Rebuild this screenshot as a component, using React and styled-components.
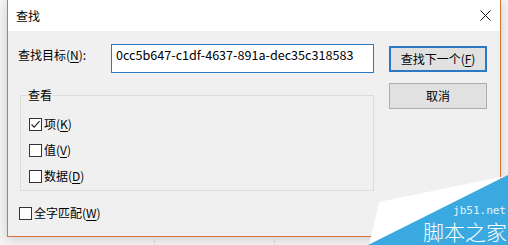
import React from 'react';
import styled, { createGlobalStyle } from 'styled-components';

const GlobalStyle = createGlobalStyle`
  html, body {
    margin: 0;
    padding: 0;
    background: #f4f4f4;
  }
  body {
    font-family: "Noto Sans CJK SC", "Noto Sans", sans-serif;
    font-size: 12px;
    color: #000;
  }
`;

const Screen = styled.div`
  position: relative;
  width: 508px;
  height: 245px;
  overflow: hidden;
  background: #f4f4f4;
  display: flex;
  flex-direction: column;
`;

const DialogRow = styled.div`
  display: flex;
  padding-left: 7px;
  height: 237px;
  flex-shrink: 0;
`;

const Dialog = styled.div`
  width: 494px;
  box-sizing: border-box;
  border: 1px solid #d9713a;
  border-top: none;
  background: #f0f0f0;
  box-shadow: 0 2px 10px rgba(0, 0, 0, 0.16);
  display: flex;
  flex-direction: column;
`;

const TitleBar = styled.div`
  height: 31px;
  flex-shrink: 0;
  background: #fff;
  display: flex;
  align-items: center;
  justify-content: space-between;
  padding-left: 8px;
`;

const Title = styled.span`
  line-height: 16px;
`;

const CloseBtn = styled.div`
  width: 30px;
  height: 31px;
  display: flex;
  align-items: center;
  justify-content: center;
`;

const Body = styled.div`
  flex: 1;
  display: grid;
  grid-template-columns: 366px 98px;
  column-gap: 15px;
  padding: 13px 13px 0 0;
`;

const LeftCol = styled.div`
  padding-left: 10px;
  display: flex;
  flex-direction: column;
`;

const FindRow = styled.div`
  display: flex;
  align-items: flex-start;
`;

const Label = styled.label`
  width: 93px;
  margin-top: 3px;
  line-height: 16px;
`;

const TextBox = styled.div`
  width: 263px;
  height: 29px;
  box-sizing: border-box;
  border: 1px solid #2a7bc4;
  background: #fff;
  padding: 2px 4px 0;
  line-height: 16px;
  font-size: 12.6px;
  white-space: nowrap;
`;

const Group = styled.fieldset`
  margin: 14px 0 0 2px;
  width: 354px;
  box-sizing: border-box;
  border: 1px solid #dcdcdc;
  padding: 8px 7px 1px;
`;

const Legend = styled.legend`
  padding: 0;
  line-height: 16px;
`;

const CheckRow = styled.div`
  display: flex;
  align-items: center;
  height: 26px;
  margin-left: ${p => p.$indent || 0}px;
  margin-top: ${p => p.$top || 0}px;
`;

const Box = styled.span`
  width: 13px;
  height: 13px;
  box-sizing: border-box;
  border: 1px solid #333;
  background: #fff;
  display: flex;
  align-items: center;
  justify-content: center;
  margin-right: 2px;
`;

const CheckText = styled.span`
  line-height: 16px;
`;

const Key = styled.u`
  text-underline-offset: 2px;
`;

const RightCol = styled.div`
  display: flex;
  flex-direction: column;
`;

const Button = styled.div`
  height: 26px;
  box-sizing: border-box;
  background: #e1e1e1;
  border: ${p => (p.$primary ? '2px solid #2b78c5' : '1px solid #adadad')};
  margin-top: ${p => p.$top}px;
  display: flex;
  align-items: center;
  justify-content: center;
  line-height: 16px;
`;

const Footer = styled.div`
  flex: 1;
  display: flex;
`;

const FooterCell = styled.div`
  width: ${p => p.$w}px;
  border-right: 1px solid #d6d6d6;
  box-sizing: border-box;
`;

const Watermark = styled.svg`
  position: absolute;
  right: 0;
  bottom: 0;
`;

const Check = ({ checked, children, indent, top }) => (
  <CheckRow $indent={indent} $top={top}>
    <Box>
      {checked && (
        <svg width="11" height="11" viewBox="0 0 11 11">
          <path d="M1.5 5.5 L4.2 8.2 L9.5 2.2" fill="none" stroke="#222" strokeWidth="1.1" />
        </svg>
      )}
    </Box>
    <CheckText>{children}</CheckText>
  </CheckRow>
);

export default function App() {
  return (
    <Screen>
      <GlobalStyle />
      <DialogRow>
        <Dialog>
          <TitleBar>
            <Title>查找</Title>
            <CloseBtn>
              <svg width="11" height="11" viewBox="0 0 11 11">
                <path d="M0.5 0.5 L10.5 10.5 M10.5 0.5 L0.5 10.5" stroke="#111" strokeWidth="1" />
              </svg>
            </CloseBtn>
          </TitleBar>
          <Body>
            <LeftCol>
              <FindRow>
                <Label>查找目标(<Key>N</Key>):</Label>
                <TextBox>0cc5b647-c1df-4637-891a-dec35c318583</TextBox>
              </FindRow>
              <Group>
                <Legend>查看</Legend>
                <Check checked indent={1}>项(<Key>K</Key>)</Check>
                <Check indent={1}>值(<Key>V</Key>)</Check>
                <Check indent={1}>数据(<Key>D</Key>)</Check>
              </Group>
              <Check indent={1} top={9}>全字匹配(<Key>W</Key>)</Check>
            </LeftCol>
            <RightCol>
              <Button $primary $top={2}>查找下一个(<Key>F</Key>)</Button>
              <Button $top={11}>取消</Button>
            </RightCol>
          </Body>
        </Dialog>
      </DialogRow>
      <Footer>
        <FooterCell $w={155} />
        <FooterCell $w={120} />
      </Footer>
      <Watermark width="140" height="70" viewBox="0 0 140 70">
        <polygon points="1,70 11,27 137,1" fill="#ffffff" />
        <polygon points="140,0 140,70 0,70" fill="#3aa9e0" />
        <text x="138" y="39" textAnchor="end" fill="#e6f3fb" fontSize="11" fontFamily="DejaVu Sans Mono, monospace">jb51.net</text>
        <text x="139" y="65" textAnchor="end" fill="#ffffff" fontSize="21" fontWeight="300" fontFamily="Noto Sans CJK SC, sans-serif">脚本之家</text>
      </Watermark>
    </Screen>
  );
}
